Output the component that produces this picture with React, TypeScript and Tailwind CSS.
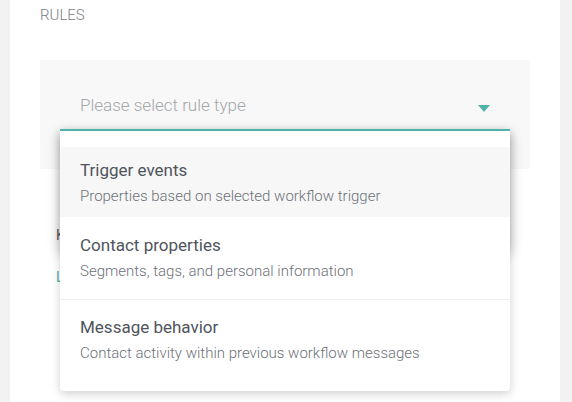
import type { ReactNode } from "react";

interface RuleOption {
  title: string;
  description: string;
  className: string;
}

const ruleOptions: RuleOption[] = [
  {
    title: "Trigger events",
    description: "Properties based on selected workflow trigger",
    className: "bg-[#f7f7f7] pt-[11px] pb-[11px]",
  },
  {
    title: "Contact properties",
    description: "Segments, tags, and personal information",
    className: "pt-[16px] pb-[18px] border-b border-[#f3eef0]",
  },
  {
    title: "Message behavior",
    description: "Contact activity within previous workflow messages",
    className: "pt-[15px] pb-[28px]",
  },
];

function OptionRow({ option }: { option: RuleOption }) {
  return (
    <div className={`px-5 ${option.className}`}>
      <p className="text-[17px] leading-6 text-[#4f545c]">{option.title}</p>
      <p className="mt-1 text-[15px] leading-5 font-light text-[#6d7178]">
        {option.description}
      </p>
    </div>
  );
}

function Panel({ children }: { children: ReactNode }) {
  return (
    <div className="h-full w-[550px] bg-white px-[30px] pt-[5px]">{children}</div>
  );
}

export default function App() {
  return (
    <div className="h-[402px] w-[572px] overflow-hidden bg-[#f2f2f2] px-[10px] font-['Roboto',sans-serif]">
      <Panel>
        <p className="text-[15px] leading-5 font-light text-[#7a7d82]">RULES</p>

        <div className="relative mt-[35px] h-[109px] w-[490px] bg-[#f8f8f8] px-10 pt-[33px]">
          <div className="flex items-center justify-between">
            <span className="text-[17px] leading-6 font-light text-[#a4a7ab]">
              Please select rule type
            </span>
            <svg
              width="12"
              height="7"
              viewBox="0 0 12 7"
              className="mt-[6px]"
              aria-hidden="true"
            >
              <path d="M0 0h12L6 7z" fill="#4fb3ab" />
            </svg>
          </div>

          {/* layer beneath the menu, only its shadow shows */}
          <div className="absolute top-[70px] left-5 z-10 h-[120px] w-[450px] bg-white shadow-[0_4px_12px_rgba(0,0,0,0.28)]" />

          <div className="absolute top-[69px] left-5 z-20 w-[450px] rounded-b-[4px] border-t-2 border-[#4fb3ab] bg-white pt-[16px] shadow-[0_3px_10px_rgba(0,0,0,0.18)]">
            {ruleOptions.map((option) => (
              <OptionRow key={option.title} option={option} />
            ))}
          </div>
        </div>

        <div className="pl-4 pt-[56px]">
          <p className="text-sm leading-5 text-[#5a5e66]">Keep in mind</p>
          <p className="mt-[22px] text-sm leading-5 text-[#4fb3ab]">Learn more</p>
        </div>
      </Panel>
    </div>
  );
}
